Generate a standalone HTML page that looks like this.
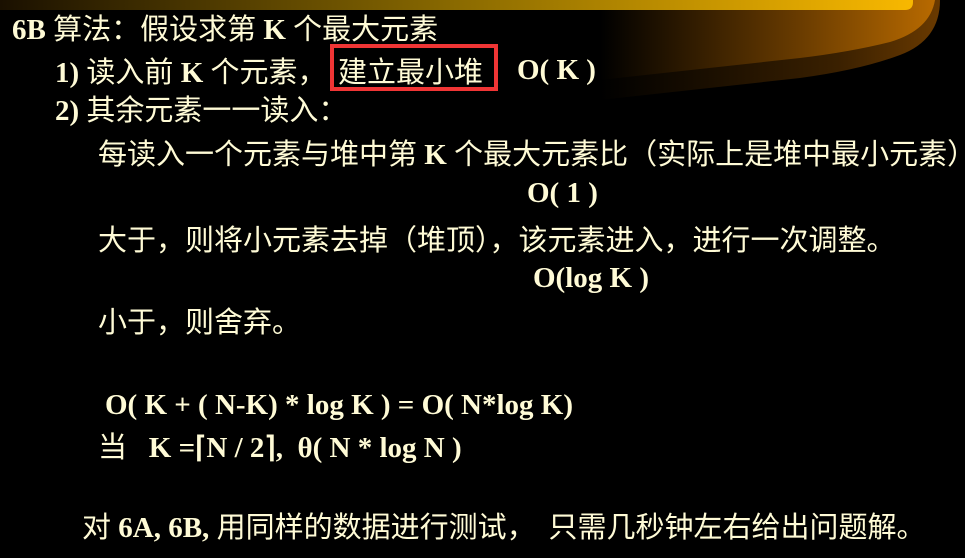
<!DOCTYPE html>
<html><head><meta charset="utf-8"><style>
html,body{margin:0;padding:0;background:#000;width:965px;height:558px;overflow:hidden;position:relative}
.t{position:absolute;font-family:"Liberation Serif","Noto Serif CJK SC","Noto Sans CJK SC",serif;font-size:29px;line-height:30px;color:#fffbd6;white-space:pre}
.c{font-family:"Noto Sans CJK SC","WenQuanYi Zen Hei",sans-serif;font-weight:normal}
b{font-weight:bold;font-family:"Liberation Serif",serif}
</style></head><body>
<svg width="965" height="160" style="position:absolute;left:0;top:0">
<defs>
<linearGradient id="g1" x1="0" x2="1" y1="0" y2="0"><stop offset="0" stop-color="#1a1000"/><stop offset="0.5" stop-color="#8a6a00"/><stop offset="1" stop-color="#f8b800"/></linearGradient>
<linearGradient id="g2" x1="0" x2="1"><stop offset="0" stop-color="#000"/><stop offset="0.6" stop-color="#6a3c00"/><stop offset="1" stop-color="#b86a00"/></linearGradient>
<linearGradient id="g3" x1="0" x2="1"><stop offset="0" stop-color="#000"/><stop offset="0.7" stop-color="#3a2000"/><stop offset="1" stop-color="#6a3a00"/></linearGradient>
</defs>
<path d="M600 0 L940 0 Q940 40 900 55 Q860 70 800 78 L600 100 Z" fill="url(#g3)"/>
<path d="M600 0 L935 0 Q930 30 890 42 Q850 52 800 58 L600 80 Z" fill="url(#g2)"/>
<path d="M0 0 L913 0 L913 2 Q913 10 905 10 L0 10 Z" fill="url(#g1)"/>
</svg>
<div class="t" style="left:12px;top:12px"><b>6B </b><span class="c">算法：假设求第</span><b> K </b><span class="c">个最大元素</span></div>
<div class="t" style="left:55px;top:55px"><b>1) </b><span class="c">读入前</span><b> K </b><span class="c">个元素，</span></div>
<div style="position:absolute;left:330px;top:44px;width:160px;height:39px;border:4px solid #f03535"></div>
<div class="t c" style="left:338px;top:55px">建立最小堆</div>
<div class="t" style="left:517px;top:55px"><b>O( K )</b></div>
<div class="t" style="left:55px;top:93px"><b>2) </b><span class="c">其余元素一一读入：</span></div>
<div class="t" style="left:98px;top:137px"><span class="c">每读入一个元素与堆中第</span><b> K </b><span class="c">个最大元素比（实际上是堆中最小元素）</span></div>
<div class="t" style="left:527px;top:178px"><b>O( 1 )</b></div>
<div class="t c" style="left:98px;top:223px">大于，则将小元素去掉（堆顶），该元素进入，进行一次调整。</div>
<div class="t" style="left:533px;top:263px"><b>O(log K )</b></div>
<div class="t c" style="left:98px;top:305px">小于，则舍弃。</div>
<div class="t" style="left:105px;top:390px"><b>O( K + ( N-K) * log K ) = O( N*log K)</b></div>
<div class="t" style="left:98px;top:430px"><span class="c">当</span><b>   K =⌈N / 2⌉,  θ( N * log N )</b></div>
<div class="t" style="left:82px;top:510px"><span class="c">对</span><b> 6A, 6B, </b><span class="c">用同样的数据进行测试，  只需几秒钟左右给出问题解。</span></div>
</body></html>
